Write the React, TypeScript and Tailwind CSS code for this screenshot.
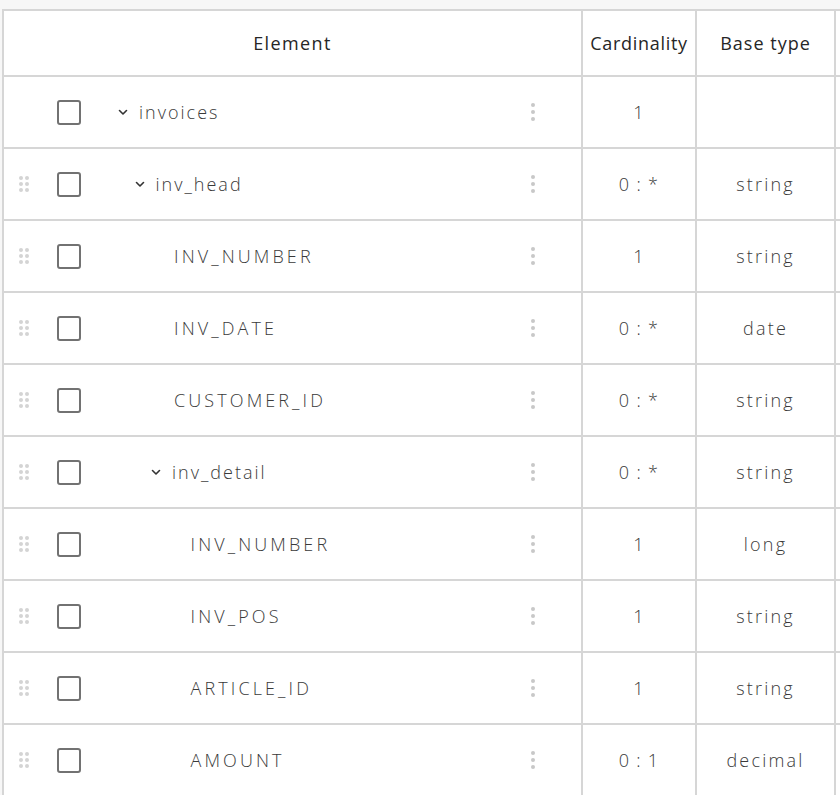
import React from 'react';

type Node = {
  name: string;
  depth: number;
  folder?: boolean;
  root?: boolean;
  cardinality: string;
  baseType: string;
};

const rows: Node[] = [
  { name: 'invoices', depth: 0, folder: true, root: true, cardinality: '1', baseType: '' },
  { name: 'inv_head', depth: 1, folder: true, cardinality: '0 : *', baseType: 'string' },
  { name: 'INV_NUMBER', depth: 2, cardinality: '1', baseType: 'string' },
  { name: 'INV_DATE', depth: 2, cardinality: '0 : *', baseType: 'date' },
  { name: 'CUSTOMER_ID', depth: 2, cardinality: '0 : *', baseType: 'string' },
  { name: 'inv_detail', depth: 2, folder: true, cardinality: '0 : *', baseType: 'string' },
  { name: 'INV_NUMBER', depth: 3, cardinality: '1', baseType: 'long' },
  { name: 'INV_POS', depth: 3, cardinality: '1', baseType: 'string' },
  { name: 'ARTICLE_ID', depth: 3, cardinality: '1', baseType: 'string' },
  { name: 'AMOUNT', depth: 3, cardinality: '0 : 1', baseType: 'decimal' },
];

function DragHandle() {
  return (
    <div className="grid grid-cols-2 gap-x-[2px] gap-y-[2px]">
      {[0, 1, 2, 3, 4, 5].map(i => (
        <span key={i} className="block w-[4px] h-[4px] rounded-full bg-[#d4d4d4]" />
      ))}
    </div>
  );
}

function Kebab() {
  return (
    <div className="flex flex-col gap-[3px]">
      {[0, 1, 2].map(i => (
        <span key={i} className="block w-[4px] h-[4px] rounded-full bg-[#c8c8c8]" />
      ))}
    </div>
  );
}

function Chevron() {
  return (
    <svg width="12" height="12" viewBox="0 0 12 12" className="shrink-0">
      <path d="M2.5 4.5 L6 8 L9.5 4.5" fill="none" stroke="#333" strokeWidth="1.6" strokeLinecap="round" strokeLinejoin="round" />
    </svg>
  );
}

function ElementCell({ node }: { node: Node }) {
  return (
    <div className="h-[70px] bg-white flex items-center font-light">
      <div className="w-[53px] pl-[15px] flex items-center">
        {!node.root && <DragHandle />}
      </div>
      <span className="block w-[24px] h-[25px] rounded-[3px] border-[2.5px] border-[#727272] shrink-0" />
      <div className="flex-1 flex items-center pl-[36px]">
        <div className="flex items-center" style={{ paddingLeft: node.depth * 16.5 }}>
          {node.folder ? (
            <>
              <Chevron />
              <span className="ml-[10px] tracking-[2px]">{node.name}</span>
            </>
          ) : (
            <span className="ml-[24px] tracking-[3.1px]">{node.name}</span>
          )}
        </div>
      </div>
      <div className="pr-[46px]">
        <Kebab />
      </div>
    </div>
  );
}

export default function App() {
  return (
    <div
      className="w-[840px] h-[795px] overflow-hidden bg-[#f7f7f7] pt-[9px] pl-[2px] text-[18px] text-[#3a3a3a]"
      style={{ fontFamily: '"Open Sans", "Liberation Sans", sans-serif' }}
    >
      <div className="grid grid-cols-[577px_112px_137px_200px] gap-[2px] bg-[#d6d6d6] p-[2px] w-max">
        {/* header */}
        <div className="h-[64px] bg-white flex items-center justify-center text-[#262626] tracking-[1.4px]">Element</div>
        <div className="h-[64px] bg-white flex items-center justify-center text-[#262626] tracking-[0.7px]">Cardinality</div>
        <div className="h-[64px] bg-white flex items-center justify-center text-[#262626] tracking-[1px]">Base type</div>
        <div className="h-[64px] bg-white" />

        {rows.map((node, i) => (
          <React.Fragment key={i}>
            <ElementCell node={node} />
            <div className="h-[70px] bg-white flex items-center justify-center font-light tracking-[1.3px]">
              {node.cardinality}
            </div>
            <div className="h-[70px] bg-white flex items-center justify-center font-light tracking-[2.2px]">
              {node.baseType}
            </div>
            <div className="h-[70px] bg-white" />
          </React.Fragment>
        ))}
      </div>
    </div>
  );
}
